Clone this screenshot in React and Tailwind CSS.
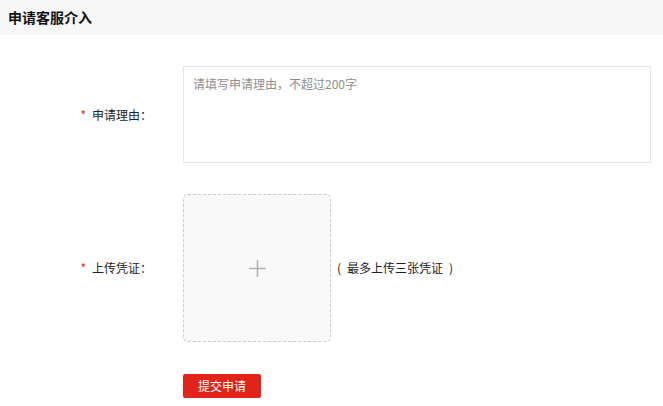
export default function App() {
  const font = { fontFamily: '"Microsoft YaHei", "Noto Sans CJK SC", "Noto Sans", sans-serif' };
  return (
    <div className="w-[663px] h-[406px] bg-white text-[#333] overflow-hidden" style={font}>
      <div className="h-[35px] bg-[#f7f7f7] flex items-center px-2">
        <span className="text-[14px] font-bold text-[#111]">申请客服介入</span>
      </div>
      <div className="pt-[31px]">
        <div className="flex items-center">
          <div className="w-[183px] pr-[31px] text-right text-[12px] text-[#222]">
            <span className="text-[#e2231a] mr-[6px]">*</span>申请理由：
          </div>
          <textarea
            className="w-[468px] h-[97px] border border-[#e6e6e6] px-[9px] py-[8px] text-[12px] leading-[18px] resize-none outline-none placeholder:text-[#8f8f8f]"
            placeholder="请填写申请理由，不超过200字"
          />
        </div>
        <div className="flex items-center mt-[31px]">
          <div className="w-[183px] pr-[31px] text-right text-[12px] text-[#222]">
            <span className="text-[#e2231a] mr-[6px]">*</span>上传凭证：
          </div>
          <div className="w-[148px] h-[148px] border border-dashed border-[#cccccc] rounded-[5px] bg-[#f9f9f9] flex items-center justify-center">
            <svg width="17" height="17" viewBox="0 0 17 17">
              <path d="M8.5 0v17M0 8.5h17" stroke="#b3b3b3" strokeWidth="1.6" />
            </svg>
          </div>
          <span className="ml-[6px] text-[12px] text-[#222] flex items-center">
            <span>(</span>
            <span className="mx-[6px]">最多上传三张凭证</span>
            <span>)</span>
          </span>
        </div>
        <div className="mt-[30px] pl-[183px]">
          <button className="w-[78px] h-[24px] bg-[#e2231a] text-white text-[12px] rounded-[2px]">提交申请</button>
        </div>
      </div>
    </div>
  );
}
